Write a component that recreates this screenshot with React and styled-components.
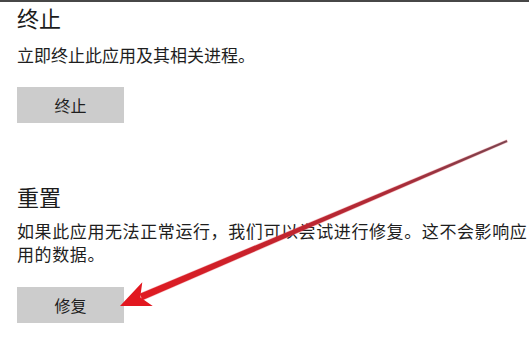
import React from "react";
import styled, { createGlobalStyle } from "styled-components";

const GlobalStyle = createGlobalStyle`
  html, body {
    margin: 0;
    padding: 0;
    background: #ffffff;
  }
  body {
    font-family: "Noto Sans CJK SC", "Noto Sans", sans-serif;
    color: #1e1e1e;
  }
`;

const Page = styled.div`
  position: relative;
  width: 529px;
  height: 339px;
  box-sizing: border-box;
  border-top: 2px solid #474747;
  padding: 0 0 0 17px;
  overflow: hidden;
  background: #ffffff;
`;

const Section = styled.section`
  display: flex;
  flex-direction: column;
  align-items: flex-start;
  margin-top: ${(props) => props.$top}px;
`;

const Heading = styled.h2`
  margin: 0;
  font-size: 22px;
  font-weight: 400;
  line-height: 28px;
  color: #1c1c1c;
`;

const Description = styled.p`
  margin: ${(props) => props.$gap}px 0 0;
  width: 512px;
  font-size: 17px;
  line-height: 23px;
  letter-spacing: ${(props) => props.$tracking || 0}px;
  color: #1e1e1e;
`;

const ActionButton = styled.button`
  margin-top: ${(props) => props.$gap}px;
  width: 107px;
  height: 36px;
  border: none;
  background: #cccccc;
  font-family: "Noto Sans CJK SC", "Noto Sans", sans-serif;
  font-size: 16px;
  color: #1e1e1e;
  padding: 0;
  cursor: default;
`;

const Overlay = styled.svg`
  position: absolute;
  left: 0;
  top: 0;
  pointer-events: none;
`;

function Arrow() {
  return (
    <Overlay width="529" height="339" viewBox="0 0 529 339">
      <defs>
        <linearGradient id="shaft" gradientUnits="userSpaceOnUse" x1="507" y1="139" x2="141" y2="295">
          <stop offset="0" stopColor="#6e4651" />
          <stop offset="0.3" stopColor="#a92c38" />
          <stop offset="1" stopColor="#e01b22" />
        </linearGradient>
      </defs>
      <polygon
        points="506.6,138.1 507.4,139.9 142.4,298.2 139.6,291.8"
        fill="url(#shaft)"
        stroke="rgba(230,80,90,0.25)"
        strokeWidth="1.2"
      />
      <polygon points="120,304 142.3,280.2 140.2,295.2 152.7,304" fill="#e2171f" />
    </Overlay>
  );
}

export default function App() {
  return (
    <>
      <GlobalStyle />
      <Page>
        <Section $top={1}>
          <Heading>终止</Heading>
          <Description $gap={12}>立即终止此应用及其相关进程。</Description>
          <ActionButton $gap={21}>终止</ActionButton>
        </Section>
        <Section $top={59}>
          <Heading>重置</Heading>
          <Description $gap={9} $tracking={0.6}>
            如果此应用无法正常运行，我们可以尝试进行修复。这不会影响应用的数据。
          </Description>
          <ActionButton $gap={22}>修复</ActionButton>
        </Section>
        <Arrow />
      </Page>
    </>
  );
}
